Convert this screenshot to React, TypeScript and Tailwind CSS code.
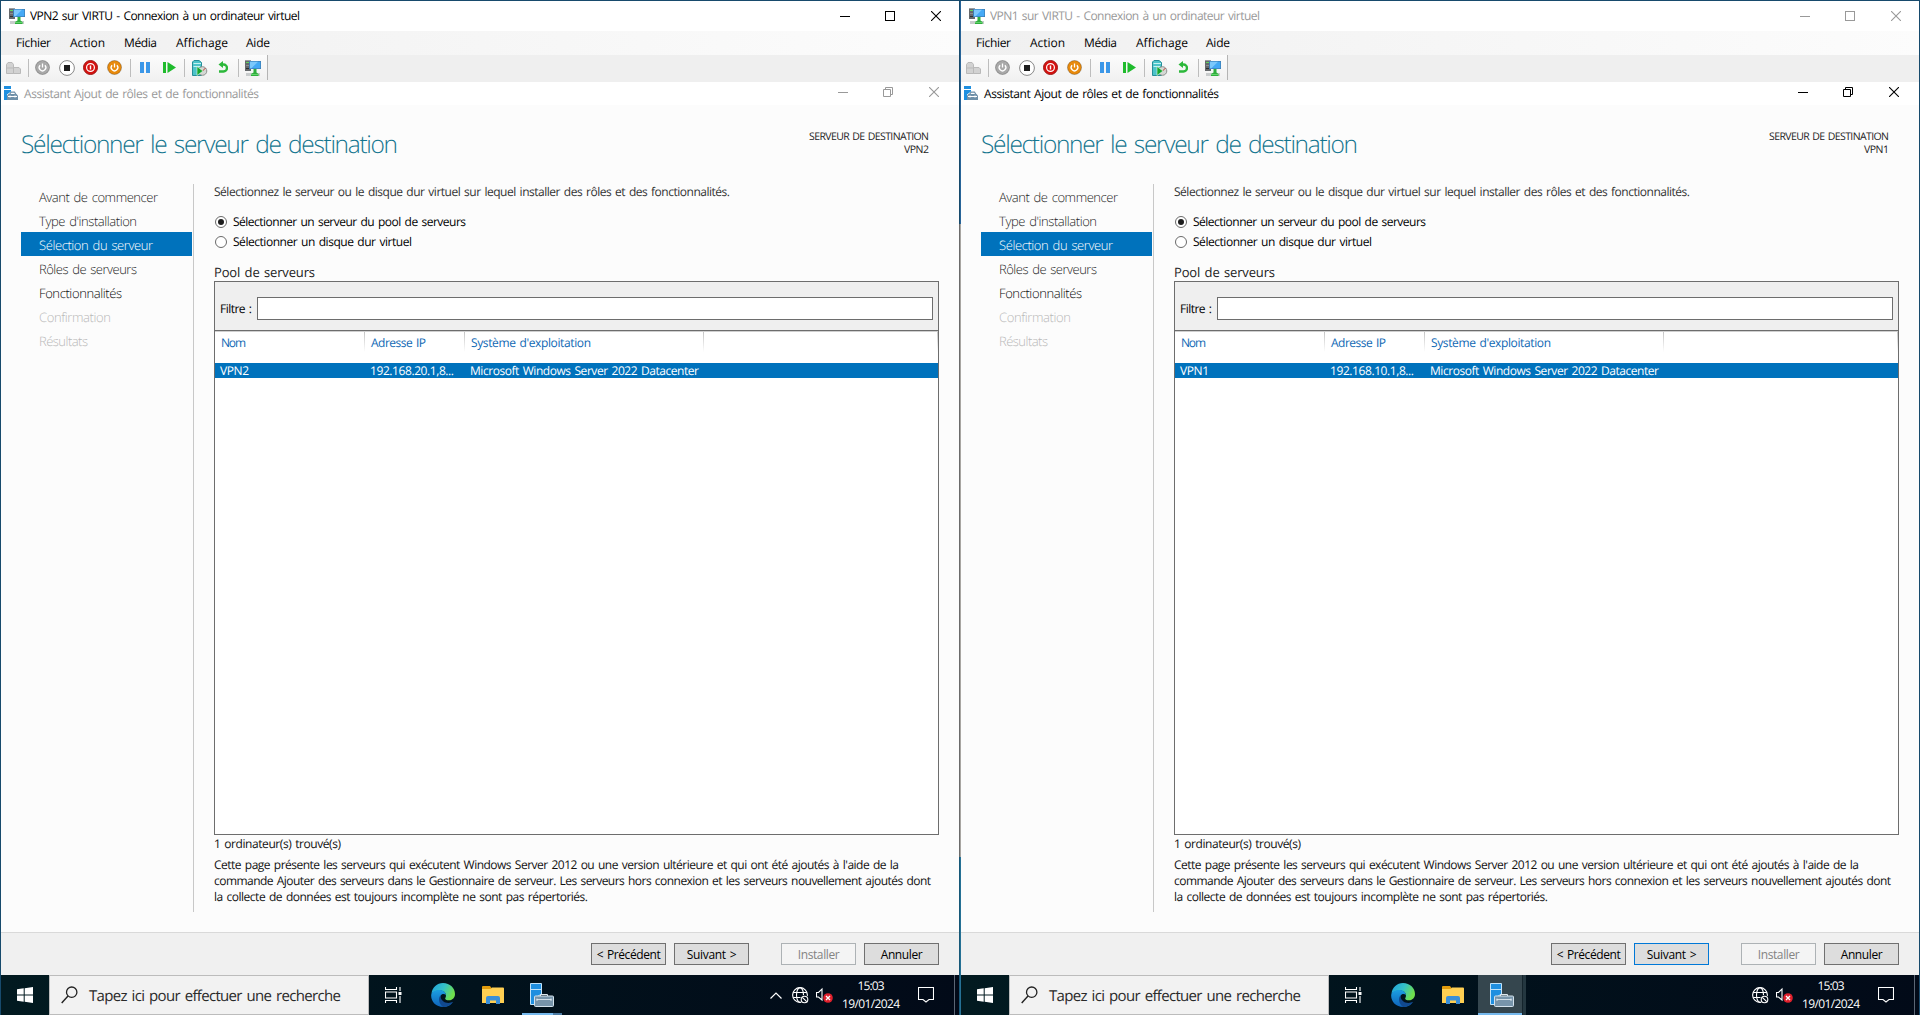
import { useLayoutEffect, useRef, useState } from "react";
import type { ReactNode } from "react";

/* A single line of text whose tracking is adjusted so that it spans `w` pixels. */
function Line({ children, w, className = "" }: { children: string; w: number; className?: string }) {
  const ref = useRef<HTMLSpanElement>(null);
  const [spacing, setSpacing] = useState<number>(0);
  useLayoutEffect(() => {
    const el = ref.current;
    if (!el) return;
    const natural = el.getBoundingClientRect().width;
    setSpacing((w - natural) / Math.max(1, children.length - 1));
  }, [w, children]);
  return (
    <span className={"block shrink-0 whitespace-pre " + className} style={{ width: w }}>
      <span ref={ref} className="inline-block [word-spacing:0.1em]" style={{ letterSpacing: spacing }}>
        {children}
      </span>
    </span>
  );
}

function VmIcon() {
  return (
    <svg width="16" height="16" viewBox="0 0 16 16" className="shrink-0">
      <rect x="0" y="0" width="6" height="11" fill="#66696c" />
      <rect x="0" y="0" width="6" height="1" fill="#9a9ea1" />
      <rect x="1" y="2" width="3" height="1" fill="#5fd35f" />
      <rect x="1" y="5" width="4" height="1" fill="#8b8f92" />
      <rect x="1" y="8" width="4" height="1" fill="#2c2f31" />
      <rect x="4" y="1" width="12" height="8" fill="#3b7db4" />
      <rect x="5" y="1.700" width="10.300" height="6.600" fill="#45a9f5" />
      <path d="M5 1.700H13L6.500 8.300H5Z" fill="#7cc8fb" />
      <rect x="1" y="13" width="14" height="3" fill="#c9cccd" />
      <path d="M8.500 9H11.500V12.500L13.500 14V16H6V14L8.500 12.500Z" fill="#2fae3d" />
      <rect x="6" y="14" width="7.500" height="1" fill="#62d36b" />
    </svg>
  );
}

function RolesIcon() {
  return (
    <svg width="15" height="15" viewBox="0 0 15 15" className="shrink-0">
      <rect x="0" y="0" width="7" height="3" fill="#1e8fe0" />
      <path d="M0 4H7V5.500L3 8.500V14H0Z" fill="#1e8fe0" />
      <path d="M5.500 8.500L7 6.200H10.500L12 8.500" fill="none" stroke="#7090a8" strokeWidth="1.200" />
      <path d="M3 14V9.500L4.500 8H12.500L14 9.500V14Z" fill="#7090a8" />
      <path d="M4 10.500H13M6 9.500V11.500M11 9.500V11.500" stroke="#fff" strokeWidth="1" />
    </svg>
  );
}

function Power({ color }: { color: string }) {
  return (
    <svg width="16" height="16" viewBox="0.5 0.5 16 16" className="shrink-0">
      <circle cx="8" cy="8" r="7" fill={color} stroke="#000" strokeOpacity=".25" />
      <path d="M5.600 5.700A3.300 3.300 0 1 0 10.400 5.700M8 4V8" fill="none" stroke="#fff" strokeWidth="1.300" />
    </svg>
  );
}

function Sep({ className = "" }: { className?: string }) {
  return <span className={"h-[18px] w-px shrink-0 bg-[#bdbdbd] " + className} />;
}

function Toolbar() {
  return (
    <div className="flex h-[27px] shrink-0 bg-[#efefef]">
      <div className="flex h-[25px] w-[267px] items-center border-r border-[#b4b4b4] bg-linear-to-b from-[#fcfcfc] to-[#f1f1f1] pl-[5px]">
        <svg width="15" height="12" viewBox="0 0 15 12" className="shrink-0">
          <path d="M.5 11.500V2.500L2 .5H6L7.500 2.500V11.500Z" fill="#d2d2d2" stroke="#b9b9b9" />
          <path d="M.5 6H7M7.500 11.500V5.500H13L14.500 7V11.500Z" fill="#d2d2d2" stroke="#b9b9b9" />
        </svg>
        <Sep className="ml-[7px]" />
        <span className="ml-[6px]"><Power color="#a9a9a9" /></span>
        <svg width="16" height="16" viewBox="0 0 16 16" className="ml-[8px] shrink-0">
          <circle cx="8" cy="8" r="7.400" fill="#fff" stroke="#888" />
          <rect x="5" y="5" width="6" height="6" fill="#1e1e1e" />
        </svg>
        <svg width="16" height="16" viewBox="0.5 0.5 16 16" className="ml-[8px] shrink-0">
          <circle cx="8" cy="8" r="7" fill="#d6110f" stroke="#9e1a17" />
          <circle cx="8" cy="8" r="3.900" fill="none" stroke="#fff" strokeWidth="1.200" />
          <path d="M8 6V10" stroke="#fff" strokeWidth="1.400" />
        </svg>
        <span className="ml-[8px]"><Power color="#e88a0c" /></span>
        <Sep className="ml-[7px]" />
        <svg width="10" height="11" viewBox="0 0 10 11" className="ml-[9px] shrink-0">
          <path d="M0 0H4V11H0ZM6 0H10V11H6Z" fill="#3b97e8" />
        </svg>
        <svg width="13" height="11" viewBox="0 0 13 11" className="ml-[13px] shrink-0">
          <path d="M0 0H3V11H0ZM4.500 0L13 5.500L4.500 11Z" fill="#1fbb2d" />
        </svg>
        <Sep className="ml-[8px]" />
        <svg width="16" height="16" viewBox="0 0 16 16" className="ml-[7px] shrink-0">
          <path d="M.5 2L2 .5H7L9.500 2.500V15.500H.5Z" fill="#4cc3c9" stroke="#258e99" />
          <path d="M1.500 3.500H9M1.500 6.500H8" stroke="#c6f2f2" />
          <circle cx="10.500" cy="11" r="4.300" fill="#d4d8d4" stroke="#8d918d" />
          <path d="M10.500 11L13.500 8" stroke="#c23c35" />
          <path d="M5 6.500L11 11L5 15.500Z" fill="#14a82c" stroke="#e4f5e4" strokeWidth=".6" />
        </svg>
        <svg width="10" height="13" viewBox="0 0 10 13" className="ml-[10px] shrink-0">
          <path d="M3 3.500H5.500A3 3 0 0 1 5.500 10.500H1" fill="none" stroke="#2cb83a" strokeWidth="2.300" />
          <path d="M5 0V7L.5 3.500Z" fill="#2cb83a" />
        </svg>
        <Sep className="ml-[10px]" />
        <span className="ml-[6px]"><VmIcon /></span>
      </div>
    </div>
  );
}

function Controls({ restore = false, inner = false }: { restore?: boolean; inner?: boolean }) {
  return (
    <div className={"ml-auto flex items-center " + (inner ? "mr-[20px] mb-[3px]" : "mr-[18px] mb-px")}>
      <svg width="10" height="10" viewBox="0 0 10 10"><path d="M0 5.500H10" stroke="currentColor" /></svg>
      <svg width="10" height="10" viewBox="0 0 10 10" className="ml-[35px]">
        {restore ? (
          <path d="M.5 2.500H7.500V9.500H.5ZM2.500 2.500V.5H9.500V7.500H7.500" fill="none" stroke="currentColor" />
        ) : (
          <rect x=".5" y=".5" width="9" height="9" fill="none" stroke="currentColor" />
        )}
      </svg>
      <svg width="10" height="10" viewBox="0 0 10 10" className="ml-[36px]">
        <path d="M0 0L10 10M10 0L0 10" stroke="currentColor" strokeWidth="1.100" />
      </svg>
    </div>
  );
}

function Radio({ on, w, children }: { on?: boolean; w: number; children: string }) {
  return (
    <div className="flex h-5 items-center text-black">
      <span className="mr-[6px] mb-px ml-px flex size-[12px] items-center justify-center rounded-full border border-[#6a6a6a] bg-white">
        {on && <span className="size-[6px] rounded-full bg-[#1d1d1d]" />}
      </span>
      <Line w={w}>{children}</Line>
    </div>
  );
}

const steps = [
  { label: "Avant de commencer", w: 119, kind: "seen" },
  { label: "Type d'installation", w: 98, kind: "seen" },
  { label: "Sélection du serveur", w: 114, kind: "active" },
  { label: "Rôles de serveurs", w: 98, kind: "seen" },
  { label: "Fonctionnalités", w: 83, kind: "next" },
  { label: "Confirmation", w: 72, kind: "off" },
  { label: "Résultats", w: 49, kind: "off" },
];

const stepStyle: Record<string, string> = {
  seen: "text-[#262626]",
  next: "text-[#0a0a0a]",
  active: "bg-[#0072bc] text-white",
  off: "text-[#b8b8b8]",
};

function Button({ children, w, className }: { children: string; w: number; className: string }) {
  return (
    <button className={"flex h-[22px] w-[75px] items-center justify-center border pt-px " + className}>
      <Line w={w}>{children}</Line>
    </button>
  );
}

function Column({ children }: { children?: ReactNode }) {
  return (
    <div className="flex h-5 justify-between text-[#0f68b4]">
      {children}
      <span className="ml-auto h-5 w-px bg-linear-to-b from-[#c4c4c4] to-white" />
    </div>
  );
}

function Wizard({ name, ip, focused }: { name: string; ip: string; focused: boolean }) {
  return (
    <div className="flex h-[870px] shrink-0 flex-col bg-[#fcfcfc]">
      <header className="flex h-[79px] shrink-0 justify-between pl-5 pr-[30px]">
        <h1 className="pt-[23px] text-[24.500px] leading-[34px] font-light text-[#13758f]">
          <Line w={377}>Sélectionner le serveur de destination</Line>
        </h1>
        <div className="flex flex-col items-end pt-[26px] text-[10.500px] leading-[13px] text-[#222]">
          <Line w={120}>SERVEUR DE DESTINATION</Line>
          <Line w={25}>{name}</Line>
        </div>
      </header>
      <div className="flex h-[728px] shrink-0">
        <nav className="flex w-[193px] flex-col border-r border-[#c8c8c8] pl-5 text-[13px] font-light">
          {steps.map((s) => (
            <div key={s.label} className={"flex h-6 w-[171px] shrink-0 items-center pt-[3px] pl-[18px] " + stepStyle[s.kind]}>
              <Line w={s.w}>{s.label}</Line>
            </div>
          ))}
        </nav>
        <main className="ml-5 flex w-[725px] flex-col leading-4">
          <div className="h-7 shrink-0 text-[#333]">
            <Line w={516}>Sélectionnez le serveur ou le disque dur virtuel sur lequel installer des rôles et des fonctionnalités.</Line>
          </div>
          <Radio on w={233}>Sélectionner un serveur du pool de serveurs</Radio>
          <Radio w={179}>Sélectionner un disque dur virtuel</Radio>
          <div className="flex h-[29px] items-end pb-px text-[13px] text-[#222]">
            <Line w={101}>Pool de serveurs</Line>
          </div>
          <div className="flex h-[554px] flex-col border border-[#6d6d6d] bg-white">
            <div className="flex h-[49px] shrink-0 items-center border-b border-[#6d6d6d] bg-[#efefef] pr-[5px] pl-[5px] pb-[3px] pt-[2px]">
              <Line w={32} className="pt-[7px] text-black">Filtre :</Line>
              <input className="mt-[5px] ml-[5px] h-[23px] w-[676px] border border-[#6d6d6d] bg-white" />
            </div>
            <div className="grid h-8 shrink-0 grid-cols-[150px_100px_239px_234px] border-t border-[#cfcfcf]">
              <Column><Line w={25} className="pt-[3px] pl-[6px]">Nom</Line></Column>
              <Column><Line w={55} className="pt-[3px] pl-[6px]">Adresse IP</Line></Column>
              <Column><Line w={120} className="pt-[3px] pl-[6px]">Système d'exploitation</Line></Column>
              <Column />
            </div>
            <div className="grid h-[15px] shrink-0 grid-cols-[150px_100px_1fr] items-center bg-[#0072bc] pl-[5px] leading-[15px] text-white">
              <Line w={29}>{name}</Line>
              <Line w={84}>{ip}</Line>
              <Line w={229}>Microsoft Windows Server 2022 Datacenter</Line>
            </div>
          </div>
          <div className="h-[22px] shrink-0 pt-px text-[#111]">
            <Line w={127}>1 ordinateur(s) trouvé(s)</Line>
          </div>
          <div className="shrink-0 text-[#111]">
            <Line w={685}>Cette page présente les serveurs qui exécutent Windows Server 2012 ou une version ultérieure et qui ont été ajoutés à l'aide de la</Line>
            <Line w={717}>commande Ajouter des serveurs dans le Gestionnaire de serveur. Les serveurs hors connexion et les serveurs nouvellement ajoutés dont</Line>
            <Line w={374}>la collecte de données est toujours incomplète ne sont pas répertoriés.</Line>
          </div>
        </main>
      </div>
      <footer className="mt-5 flex h-[43px] shrink-0 border-t border-[#d9d9d9] bg-[#f0f0f0] pt-[10px] pl-[590px] text-black">
        <Button w={64} className="border-[#707070] bg-[#dddddd]">{"< Précédent"}</Button>
        <Button w={50} className={"ml-2 bg-[#dddddd] " + (focused ? "border-[#0078d7]" : "border-[#707070]")}>{"Suivant >"}</Button>
        <Button w={42} className="ml-8 border-[#adb2b5] bg-[#f4f4f4] text-[#838383]">Installer</Button>
        <Button w={42} className="ml-2 border-[#707070] bg-[#dddddd]">Annuler</Button>
      </footer>
    </div>
  );
}

function EdgeIcon({ id }: { id: string }) {
  return (
    <svg width="24" height="24" viewBox="0 0 24 24">
      <defs>
        <linearGradient id={id + "a"} x1="0" y1="0" x2="1" y2=".4">
          <stop offset="0" stopColor="#1fa0dd" />
          <stop offset=".55" stopColor="#35c1c8" />
          <stop offset="1" stopColor="#6fdf4c" />
        </linearGradient>
        <linearGradient id={id + "b"} x1="0" y1="0" x2="0" y2="1">
          <stop offset="0" stopColor="#1b9fe3" />
          <stop offset="1" stopColor="#0f62b8" />
        </linearGradient>
      </defs>
      <path d="M.5 10.500C1.300 4.500 6 0 12 0C19 0 24 5 24 11C24 15 21 17.300 18 17.300C15.500 17.300 13.800 16.300 14.200 15.200C16 13 14.800 8 10 7.500C6 7 2.500 8.500.5 10.500Z" fill={"url(#" + id + "a)"} />
      <path d="M.2 12C.5 8.500 5 6.800 9 7C12.500 7.200 14.800 9.500 14.800 12C13.500 10.500 10.500 10.800 9.500 13C8 17 11.500 21.500 16 21.500C18.500 21.500 20.500 20.500 22 19C20 22 16.500 24 12 24C5 24-.3 18.500.2 12Z" fill={"url(#" + id + "b)"} />
      <path d="M9.500 12.500C7 15 7.500 20.500 12 23.900C16.500 24 20 22 22.200 18.800C17 21.500 9.500 19.500 9.500 12.500Z" fill="#11498f" />
    </svg>
  );
}

function TaskServerIcon() {
  return (
    <svg width="24" height="24" viewBox="0 0 24 24">
      <path d="M.5.500H11.500V11L5 15V21.500H.5Z" fill="#1f8fe0" stroke="#bfe2fa" />
      <path d="M.5 6.500H11.500" stroke="#bfe2fa" />
      <path d="M10.500 13V11.500H17.500V13" fill="none" stroke="#dfe8ee" />
      <rect x="4.500" y="13" width="19" height="10.500" rx="1" fill="#7794aa" stroke="#d4e2ec" />
      <path d="M6.500 16.500H21.500M7 15.500V18M21 15.500V18" stroke="#e8f0f5" strokeWidth=".8" />
    </svg>
  );
}

function Taskbar({ id, chevron, active }: { id: string; chevron: boolean; active: boolean }) {
  return (
    <div className="flex h-10 shrink-0 bg-linear-to-r from-[#021a20] via-[#01121c] to-[#020a18] text-white">
      <div className="flex w-12 shrink-0 items-center justify-center">
        <svg width="16" height="16" viewBox="0 0 16 16">
          <path d="M0 2.300L6.700 1.300V7.500H0ZM7.700 1.200L16 0V7.500H7.700ZM0 8.500H6.700V14.700L0 13.700ZM7.700 8.500H16V16L7.700 14.800Z" fill="#fff" />
        </svg>
      </div>
      <div className="flex w-[320px] shrink-0 items-center border border-[#bcbcbc] bg-[#f2f2f2] pl-[11px] text-[15px] text-[#2a2a2a]">
        <svg width="17" height="18" viewBox="0 0 17 18" className="mr-[11px]">
          <circle cx="10.700" cy="6.200" r="5.200" fill="none" stroke="#222" strokeWidth="1.300" />
          <path d="M7 10L.7 17" stroke="#222" strokeWidth="1.400" />
        </svg>
        <Line w={252} className="pt-[2px]">Tapez ici pour effectuer une recherche</Line>
      </div>
      <div className="flex w-12 shrink-0 items-center justify-center">
        <svg width="17" height="16" viewBox="0 0 17 16" fill="none" stroke="#fff" strokeWidth="1.100">
          <path d="M.5 0V2.500H11.500V0M.5 5H11.500V11H.5ZM.5 16V13.500H11.500V16M15 0V4M15 9V16" />
          <rect x="13.500" y="5" width="3" height="3" fill="#fff" stroke="none" />
        </svg>
      </div>
      <div className="flex w-[52px] shrink-0 items-center justify-center"><EdgeIcon id={id} /></div>
      <div className="flex w-[48px] shrink-0 items-center justify-center pr-px">
        <svg width="22" height="18" viewBox="0 0 22 18">
          <path d="M0 1Q0 0 1 0H8L9.500 2V4H0Z" fill="#e19b0d" />
          <path d="M0 3H8.500L10 1.500H21Q22 1.500 22 2.500V17H0Z" fill="#ffcf52" />
          <path d="M4 18V12Q4 10 6 10H16Q18 10 18 12V18H14V14.500H8V18Z" fill="#3a8fd8" />
        </svg>
      </div>
      <div className={"relative ml-px flex w-12 shrink-0 items-center justify-center " + (active ? "bg-[#35464e]" : "")}>
        <TaskServerIcon />
        {active ? (
          <>
            <span className="absolute bottom-0 left-0 h-[2px] w-[45px] bg-[#76b9ed]" />
            <span className="absolute right-0 bottom-0 h-10 w-[4px] border-l border-[#14242c] bg-[#243740]" />
          </>
        ) : (
          <>
            <span className="absolute bottom-0 left-[4px] h-[2px] w-[31px] bg-[#76b9ed]" />
            <span className="absolute bottom-0 left-[35px] h-[2px] w-[9px] bg-[#4c7ba3]" />
          </>
        )}
      </div>
      <div className="ml-auto flex items-center">
        {chevron && (
          <svg width="12" height="7" viewBox="0 0 12 7" className="mr-[10px]">
            <path d="M.5 6.500L6 1L11.500 6.500" fill="none" stroke="#fff" strokeWidth="1.200" />
          </svg>
        )}
        <svg width="17" height="17" viewBox="0 0 17 17" fill="none" stroke="#fff" strokeWidth="1.100">
          <circle cx="8" cy="8" r="7.400" />
          <ellipse cx="8" cy="8" rx="3.500" ry="7.400" />
          <path d="M1.200 5.500H14.800M1.200 10.500H9" />
          <circle cx="12.500" cy="12.500" r="4.500" fill="#020c18" stroke="none" />
          <circle cx="12.500" cy="12.500" r="3.300" />
          <path d="M10.300 10.300L14.700 14.700" />
        </svg>
        <svg width="17" height="16" viewBox="0 0 17 16" className="ml-[7px]">
          <path d="M.5 5.500H2.500L6 2V13L2.500 10H.5Z" fill="none" stroke="#fff" strokeWidth="1.100" />
          <circle cx="12" cy="11" r="4.800" fill="#e0202c" />
          <path d="M10 9L14 13M14 9L10 13" stroke="#fff" strokeWidth="1.300" />
        </svg>
        <div className="ml-[9px] flex flex-col items-center leading-[18px]">
          <Line w={27}>15:03</Line>
          <Line w={58}>19/01/2024</Line>
        </div>
        <svg width="16" height="16" viewBox="0 0 16 16" className="ml-[18px]" fill="none" stroke="#fff" strokeWidth="1.100">
          <path d="M.5.500H15.500V12.500H11L8 15L5 12.500H.5Z" />
        </svg>
        <span className="ml-[20px] h-10 w-px bg-[#5c6674]" />
        <span className="w-[4px]" />
      </div>
    </div>
  );
}

type VmProps = { name: string; ip: string; windowActive: boolean };

function VmWindow({ name, ip, windowActive }: VmProps) {
  return (
    <section className="flex h-full w-[958px] shrink-0 flex-col">
      <div className={"flex h-[30px] shrink-0 items-center bg-white pl-2 " + (windowActive ? "text-black" : "text-[#999]")}>
        <span className="mb-px"><VmIcon /></span>
        <Line w={270} className="ml-[5px]">{name + " sur VIRTU - Connexion à un ordinateur virtuel"}</Line>
        <Controls />
      </div>
      <div className="flex h-6 shrink-0 items-center bg-linear-to-r from-[#f0f0f0] to-[#fcfcfc] pl-[15px] text-black">
        <Line w={35}>Fichier</Line>
        <Line w={35} className="ml-[19px]">Action</Line>
        <Line w={33} className="ml-[19px]">Média</Line>
        <Line w={52} className="ml-[19px]">Affichage</Line>
        <Line w={24} className="ml-[18px]">Aide</Line>
      </div>
      <Toolbar />
      <div className={"flex h-[23px] shrink-0 items-center bg-white pl-[3px] " + (windowActive ? "text-[#999]" : "text-black")}>
        <RolesIcon />
        <Line w={235} className="ml-[5px]">Assistant Ajout de rôles et de fonctionnalités</Line>
        <Controls restore inner />
      </div>
      <Wizard name={name} ip={ip} focused={!windowActive} />
      <Taskbar id={name} chevron={windowActive} active={!windowActive} />
    </section>
  );
}

export default function App() {
  return (
    <div className="flex h-[1015px] w-[1920px] overflow-hidden border-t border-l border-[#174a6c] bg-[#174a6c] font-['Open_Sans','Noto_Sans',sans-serif] text-[12px] [text-rendering:geometricPrecision]">
      <VmWindow name="VPN2" ip="192.168.20.1,8..." windowActive />
      <div className="flex w-[2px] shrink-0 flex-col">
        <div className="flex h-[223px]"><span className="w-px bg-[#174a6c]" /><span className="w-px bg-[#286498]" /></div>
        <div className="flex h-[633px]"><span className="w-px bg-[#6b6b6b]" /><span className="w-px bg-[#a8a6a2]" /></div>
        <div className="flex flex-1"><span className="w-px bg-[#175878]" /><span className="w-px bg-[#267195]" /></div>
      </div>
      <VmWindow name="VPN1" ip="192.168.10.1,8..." windowActive={false} />
    </div>
  );
}
